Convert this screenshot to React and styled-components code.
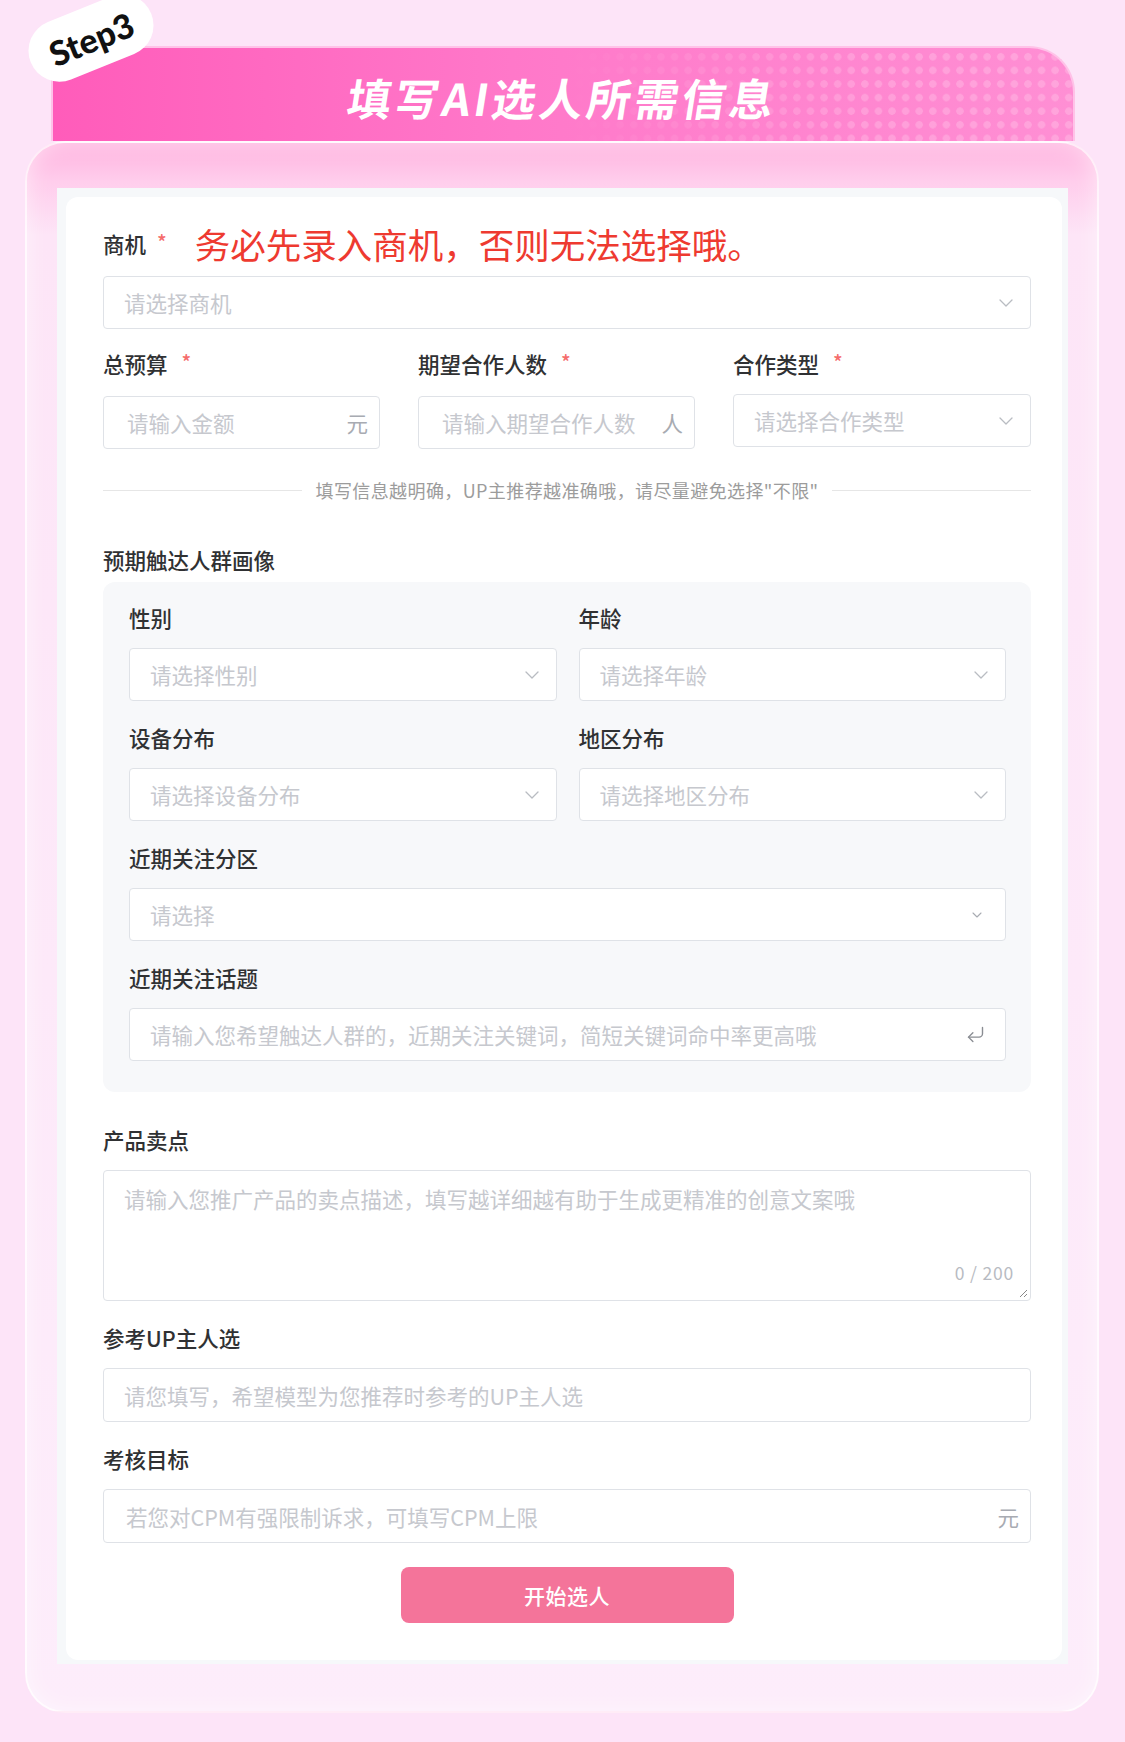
import styled, { createGlobalStyle } from 'styled-components';
import { ChevronDown, CornerDownLeft } from 'lucide-react';

const GlobalStyle = createGlobalStyle`
  * { box-sizing: border-box; }
  body {
    margin: 0;
    background: #fde4f8;
    font-family: "Noto Sans CJK SC", "Noto Sans", sans-serif;
  }
`;

const Page = styled.div`
  position: relative;
  width: 1125px;
  padding: 46px 26px 28px 25px;
  background: #fde4f8;
`;

const StepBadge = styled.div`
  position: absolute;
  left: 26px;
  top: 7px;
  width: 130px;
  height: 62px;
  border-radius: 31px;
  background: #fff;
  transform: rotate(-22deg);
  display: flex;
  align-items: center;
  justify-content: center;
  font-family: Lato, "Noto Sans", sans-serif;
  font-weight: 900;
  font-size: 34px;
  color: #111;
  z-index: 3;
`;

const Banner = styled.div`
  position: relative;
  height: 95px;
  margin: 0 24px 0 26px;
  border: 2px solid #ffc2e8;
  border-bottom: none;
  border-radius: 22px 46px 0 0;
  background: linear-gradient(90deg, #ff5cba 0%, #ff78c9 45%, #ff8fd4 100%);
  display: flex;
  align-items: center;
  justify-content: center;
  overflow: hidden;

  &::after {
    content: '';
    position: absolute;
    inset: 0;
    background-image: radial-gradient(circle, rgba(255, 255, 255, 0.2) 3.4px, transparent 4px);
    background-size: 13.6px 13.6px;
    background-position: 3px 2px;
    -webkit-mask-image: linear-gradient(90deg, transparent 50%, #000 80%);
    mask-image: linear-gradient(90deg, transparent 50%, #000 80%);
  }
`;

const BannerTitle = styled.h1`
  position: relative;
  z-index: 1;
  margin: 4px 0 0;
  font-size: 44px;
  font-weight: 700;
  letter-spacing: 3.5px;
  color: #fff;
  transform: skewX(-9deg);
`;

const Card = styled.div`
  border-radius: 40px;
  border: 2px solid rgba(255, 255, 255, 0.75);
  background: linear-gradient(180deg, #ffb2df 0px, #ffcdec 38px, #fde5f7 92px, #fdedfb 100%);
  box-shadow: inset 0 0 22px rgba(255, 255, 255, 0.55);
  padding: 45px 29px 47px 30px;
`;

const Sheet = styled.div`
  background: #f6f8fa;
  padding: 9px 6px 4px 9px;
`;

const FormCard = styled.div`
  background: #fff;
  border-radius: 12px;
  padding: 25px 31px 37px 37px;
  display: flex;
  flex-direction: column;
`;

const Field = styled.div`
  display: flex;
  flex-direction: column;
  gap: ${(p) => p.$gap ?? 19}px;
  margin-top: ${(p) => p.$mt ?? 0}px;
`;

const Label = styled.div`
  display: flex;
  align-items: center;
  height: ${(p) => p.$h ?? 24}px;
  font-size: 21.5px;
  font-weight: 500;
  color: #303133;
  white-space: nowrap;
`;

const Req = styled.span`
  position: relative;
  top: -2px;
  margin-left: ${(p) => p.$ml ?? 12}px;
  font-size: 20px;
  color: #f56c6c;
`;

const Warn = styled.span`
  margin-left: 28px;
  font-size: 35.5px;
  font-weight: 400;
  color: #ee3a30;
`;

const Box = styled.div`
  position: relative;
  height: ${(p) => p.$h ?? 53}px;
  display: flex;
  align-items: ${(p) => (p.$area ? 'flex-start' : 'center')};
  justify-content: space-between;
  padding: ${(p) => (p.$area ? '12px' : '0')} ${(p) => p.$pr ?? 12}px 0 ${(p) => p.$pl ?? 20}px;
  background: #fff;
  border: 1px solid #dfe2e7;
  border-radius: 4px;
  color: #c0c4cc;
`;

const Placeholder = styled.span`
  font-size: 21.5px;
  color: #c6c8ce;
  white-space: nowrap;
`;

const Suffix = styled.span`
  font-size: 21.5px;
  color: #a8abb2;
`;

const Row3 = styled.div`
  display: grid;
  grid-template-columns: 277px 277px 1fr;
  column-gap: 38px;
  margin-top: 22px;
`;

const Divider = styled.div`
  display: flex;
  align-items: center;
  gap: 13px;
  height: 20px;
  margin: 31px 0 47px;

  &::before,
  &::after {
    content: '';
    flex: 1;
    height: 1px;
    background: #e6e6e6;
  }
`;

const DividerText = styled.span`
  font-size: 18px;
  letter-spacing: 0.4px;
  color: #9c9c9c;
  white-space: nowrap;
`;

const Audience = styled.div`
  margin-top: 11px;
  padding: 23px 25px 31px 26px;
  border-radius: 12px;
  background: #f7f8fa;
  display: grid;
  grid-template-columns: 1fr 1fr;
  column-gap: 22px;
  row-gap: 24px;
`;

const Wide = styled.div`
  grid-column: 1 / -1;
`;

const Counter = styled.span`
  position: absolute;
  right: 16px;
  bottom: 15px;
  font-size: 17.5px;
  letter-spacing: 0.8px;
  color: #b8bbc2;
`;

const Grip = styled.svg`
  position: absolute;
  right: 2px;
  bottom: 2px;
`;

const StartButton = styled.button`
  align-self: center;
  width: 333px;
  height: 56px;
  margin-top: 24px;
  border: none;
  border-radius: 8px;
  background: #f4749a;
  color: #fff;
  font-family: inherit;
  font-size: 21px;
  font-weight: 500;
  letter-spacing: 0.5px;
`;

const Select = ({ text, small }) => (
  <Box $pr={small ? 20 : 12}>
    <Placeholder>{text}</Placeholder>
    {small ? (
      <ChevronDown size={16} strokeWidth={1.6} color="#a8abb2" />
    ) : (
      <ChevronDown size={24} strokeWidth={1.3} color="#b9bcc2" />
    )}
  </Box>
);

const App = () => {
  return (
    <Page>
      <GlobalStyle />
      <StepBadge>Step3</StepBadge>
      <Banner>
        <BannerTitle>填写AI选人所需信息</BannerTitle>
      </Banner>
      <Card>
        <Sheet>
          <FormCard>
            <Field $gap={12}>
              <Label $h={42}>
                商机<Req $ml={11}>*</Req>
                <Warn>务必先录入商机，否则无法选择哦。</Warn>
              </Label>
              <Select text="请选择商机" />
            </Field>

            <Row3>
              <Field $gap={21}>
                <Label>总预算<Req $ml={14}>*</Req></Label>
                <Box $pl={23} $pr={11}>
                  <Placeholder>请输入金额</Placeholder>
                  <Suffix>元</Suffix>
                </Box>
              </Field>
              <Field $gap={21}>
                <Label>期望合作人数<Req $ml={14}>*</Req></Label>
                <Box $pl={23} $pr={11}>
                  <Placeholder>请输入期望合作人数</Placeholder>
                  <Suffix>人</Suffix>
                </Box>
              </Field>
              <Field $gap={19}>
                <Label>合作类型<Req $ml={14}>*</Req></Label>
                <Select text="请选择合作类型" />
              </Field>
            </Row3>

            <Divider>
              <DividerText>填写信息越明确，UP主推荐越准确哦，请尽量避免选择"不限"</DividerText>
            </Divider>

            <Label>预期触达人群画像</Label>
            <Audience>
              <Field>
                <Label>性别</Label>
                <Select text="请选择性别" />
              </Field>
              <Field>
                <Label>年龄</Label>
                <Select text="请选择年龄" />
              </Field>
              <Field>
                <Label>设备分布</Label>
                <Select text="请选择设备分布" />
              </Field>
              <Field>
                <Label>地区分布</Label>
                <Select text="请选择地区分布" />
              </Field>
              <Wide>
                <Field>
                  <Label>近期关注分区</Label>
                  <Select text="请选择" small />
                </Field>
              </Wide>
              <Wide>
                <Field>
                  <Label>近期关注话题</Label>
                  <Box $pr={19}>
                    <Placeholder>请输入您希望触达人群的，近期关注关键词，简短关键词命中率更高哦</Placeholder>
                    <CornerDownLeft size={21} strokeWidth={1.6} color="#8a8d93" />
                  </Box>
                </Field>
              </Wide>
            </Audience>

            <Field $mt={35}>
              <Label>产品卖点</Label>
              <Box $area $h={131}>
                <Placeholder>请输入您推广产品的卖点描述，填写越详细越有助于生成更精准的创意文案哦</Placeholder>
                <Counter>0 / 200</Counter>
                <Grip width="10" height="10" viewBox="0 0 10 10">
                  <path d="M9 2 L2 9 M9 6 L6 9" stroke="#888" strokeWidth="1" fill="none" />
                </Grip>
              </Box>
            </Field>

            <Field $mt={24}>
              <Label>参考UP主人选</Label>
              <Box $h={54}>
                <Placeholder>请您填写，希望模型为您推荐时参考的UP主人选</Placeholder>
              </Box>
            </Field>

            <Field $mt={24}>
              <Label>考核目标</Label>
              <Box $h={54} $pl={22} $pr={11}>
                <Placeholder>若您对CPM有强限制诉求，可填写CPM上限</Placeholder>
                <Suffix>元</Suffix>
              </Box>
            </Field>

            <StartButton>开始选人</StartButton>
          </FormCard>
        </Sheet>
      </Card>
    </Page>
  );
};

export default App;
